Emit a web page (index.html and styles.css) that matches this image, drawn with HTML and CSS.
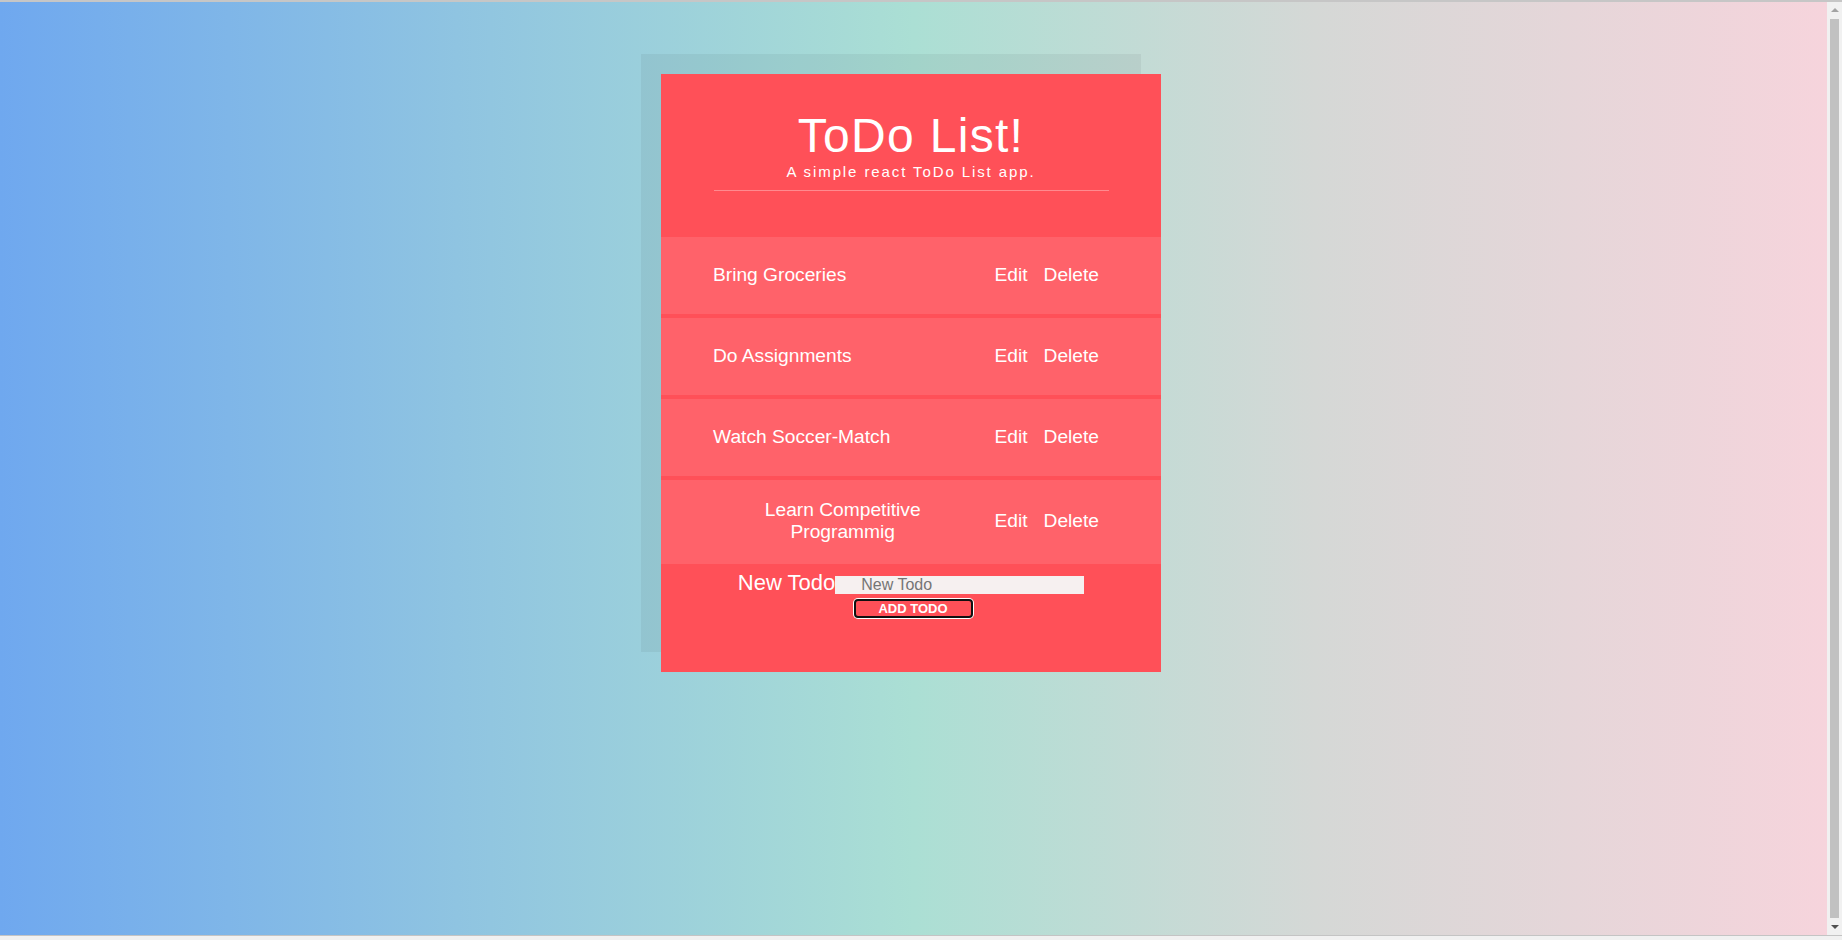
FILE: index.html
```html
<!DOCTYPE html>
<html lang="en">
<head>
<meta charset="utf-8">
<title>ToDo List</title>
<link rel="stylesheet" href="styles.css">
</head>
<body>
<div class="frame-top"></div>
<div class="window">
  <div class="viewport">
    <main class="card">
      <header class="card-header">
        <h1 class="title">ToDo List!</h1>
        <p class="subtitle">A simple react ToDo List app.</p>
        <hr class="divider">
      </header>
      <ul class="todo-list">
        <li class="todo">
          <span class="todo-text">Bring Groceries</span>
          <div class="todo-actions"><button class="todo-btn" type="button">Edit</button><button class="todo-btn" type="button">Delete</button></div>
        </li>
        <li class="todo">
          <span class="todo-text">Do Assignments</span>
          <div class="todo-actions"><button class="todo-btn" type="button">Edit</button><button class="todo-btn" type="button">Delete</button></div>
        </li>
        <li class="todo">
          <span class="todo-text">Watch Soccer-Match</span>
          <div class="todo-actions"><button class="todo-btn" type="button">Edit</button><button class="todo-btn" type="button">Delete</button></div>
        </li>
        <li class="todo">
          <span class="todo-text">Learn Competitive Programmig</span>
          <div class="todo-actions"><button class="todo-btn" type="button">Edit</button><button class="todo-btn" type="button">Delete</button></div>
        </li>
      </ul>
      <form class="new-todo">
        <div class="new-todo-line"><label class="new-todo-label" for="new-todo">New Todo</label><input class="new-todo-input" id="new-todo" type="text" placeholder="New Todo"></div>
        <div class="add-row"><button class="add-btn" type="button">ADD TODO</button></div>
      </form>
    </main>
  </div>
  <div class="scrollbar" aria-hidden="true">
    <div class="sb-arrow sb-up"></div>
    <div class="sb-thumb"></div>
    <div class="sb-arrow sb-down"></div>
  </div>
</div>
<div class="frame-bottom"></div>
</body>
</html>
```

FILE: styles.css
```css
body {
  margin: 0;
  height: 100vh;
  display: flex;
  flex-direction: column;
  overflow: hidden;
  background: #f1f1f1;
  font-family: "Liberation Sans", Arial, sans-serif;
  color: #fff;
}

.frame-top {
  flex-shrink: 0;
  height: 2px;
  background: #c6c6c6;
}

.frame-bottom {
  flex-shrink: 0;
  height: 4px;
  border-top: 1px solid #c4c4c4;
  background: #f1f1f1;
}

.window {
  flex: 1;
  min-height: 0;
  display: flex;
}

.viewport {
  flex: 1;
  min-width: 0;
  overflow: hidden;
  padding-top: 72px;
  background: linear-gradient(90deg, #6fa8ef 0%, #8fc4e1 25%, #abdfd4 50%, #d5d8d6 72%, #f6d4dc 100%);
}

.scrollbar {
  width: 15px;
  flex-shrink: 0;
  display: flex;
  flex-direction: column;
  align-items: center;
  background: #f1f1f1;
}

.sb-arrow {
  width: 0;
  height: 0;
  flex-shrink: 0;
  border-left: 4px solid transparent;
  border-right: 4px solid transparent;
}

.sb-up {
  margin: 6px 0 5px;
  border-bottom: 4px solid #a3a3a3;
}

.sb-down {
  margin: 5px 0 6px;
  border-top: 4px solid #505050;
}

.sb-thumb {
  flex: 1;
  width: 9px;
  margin: 2px 0;
  background: #c1c1c1;
}

.card {
  width: 500px;
  height: 598px;
  margin-left: calc(50% - 252.5px);
  box-sizing: border-box;
  background: #ff5058;
  box-shadow: -20px -20px 0 0 rgba(0, 0, 0, 0.05);
}

.card-header {
  height: 163px;
  box-sizing: border-box;
  padding-top: 38px;
  text-align: center;
}

.title {
  margin: 0;
  font-size: 48px;
  line-height: 48px;
  font-weight: normal;
  letter-spacing: 1.3px;
}

.subtitle {
  margin: 3px 0 0;
  font-size: 15px;
  line-height: 18px;
  letter-spacing: 1.9px;
}

.divider {
  width: 395px;
  height: 1px;
  margin: 9px auto 0;
  border: 0;
  background: #ff8a8f;
}

.todo-list {
  margin: 0;
  padding: 0;
  list-style: none;
}

.todo {
  display: flex;
  align-items: center;
  justify-content: space-between;
  padding: 19px 54px 21px 52px;
  margin-bottom: 4px;
  background: #ff626a;
  font-size: 19.2px;
}

.todo:last-child {
  margin-bottom: 0;
}

.todo-text {
  flex: 0 1 auto;
  text-align: center;
  margin-right: 14px;
}

.todo-actions {
  display: flex;
  flex-shrink: 0;
}

.todo-btn {
  padding: 7.5px 8px;
  border: 0;
  background: none;
  color: #fff;
  font-family: inherit;
  font-size: 19.2px;
  line-height: normal;
  cursor: pointer;
}

.new-todo {
  padding-top: 6px;
  text-align: center;
}

.new-todo-line {
  font-size: 22px;
}

.new-todo-input {
  width: 249px;
  height: 18px;
  box-sizing: border-box;
  padding: 0 24px 0 26px;
  border: 0;
  background: #f6f0f0;
  font-family: "Liberation Sans", Arial, sans-serif;
  font-size: 16px;
  color: #333;
  outline: none;
}

.new-todo-input::placeholder {
  color: #757575;
}

.add-row {
  margin-top: 3px;
  padding-left: 4px;
  line-height: 0;
}

.add-btn {
  width: 119px;
  height: 19px;
  padding: 0;
  border: 2px solid #101010;
  border-radius: 4px;
  box-shadow: 0 0 0 1px #fff;
  background: #ff5058;
  color: #fff;
  font-family: "Liberation Sans", Arial, sans-serif;
  font-size: 13px;
  font-weight: bold;
  line-height: 15px;
  cursor: pointer;
}
```
